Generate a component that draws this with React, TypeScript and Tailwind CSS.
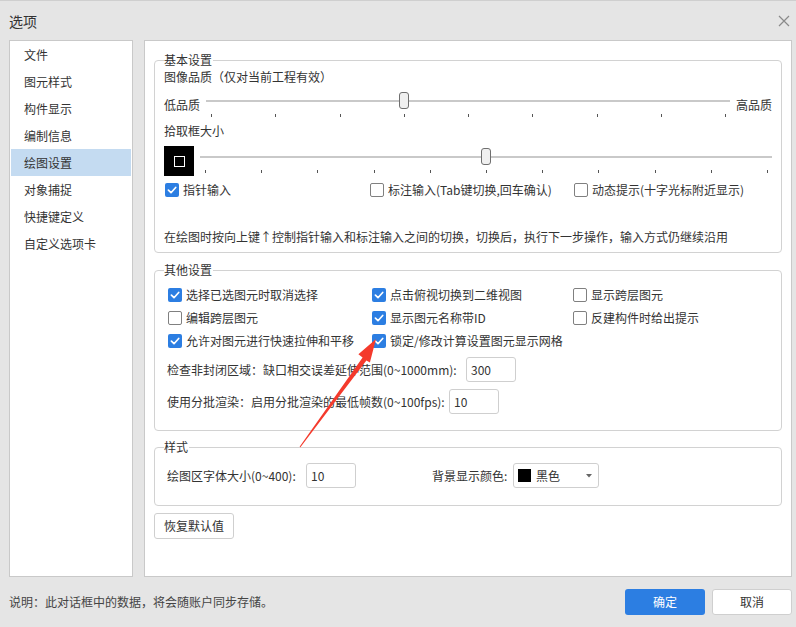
import React from 'react';

const menuItems = ['文件', '图元样式', '构件显示', '编制信息', '绘图设置', '对象捕捉', '快捷键定义', '自定义选项卡'];

const CheckBox: React.FC<{ checked?: boolean; label: string }> = ({ checked, label }) => (
  <label className="flex items-center gap-[4px] whitespace-nowrap">
    <span
      className={
        checked
          ? 'w-[14px] h-[14px] rounded-[2px] bg-[#2c7ee2] flex items-center justify-center shrink-0'
          : 'w-[14px] h-[14px] rounded-[2px] bg-white border border-[#808080] shrink-0'
      }
    >
      {checked && (
        <svg width="10" height="10" viewBox="0 0 10 10">
          <path d="M1.4 5.2 L4 7.7 L8.7 2.5" stroke="white" strokeWidth="1.7" fill="none" strokeLinecap="round" strokeLinejoin="round" />
        </svg>
      )}
    </span>
    <span>{label}</span>
  </label>
);

// track + ticks + thumb, the thumb sits on the tick at index `value`
const Slider: React.FC<{ ticks: number; value: number; trackTop: number; width: string; height: string }> = ({
  ticks,
  value,
  trackTop,
  width,
  height,
}) => {
  const pct = (i: number) => (i / (ticks - 1)) * 100;
  return (
    <div className={`relative shrink-0 ${width} ${height}`}>
      <div className="absolute left-0 right-0 h-[2px] bg-[#c9c9c9]" style={{ top: trackTop }} />
      <div className="absolute left-[5px] right-[5px] top-0 bottom-0">
        {Array.from({ length: ticks }).map((_, i) => (
          <div key={i} className="absolute w-[1px] h-[3px] bg-[#555]" style={{ left: `${pct(i)}%`, top: trackTop + 14 }} />
        ))}
        <div
          className="absolute w-[10px] h-[17px] -ml-[5px] rounded-[3px] bg-[#f0f0f0] border border-[#6f6f6f]"
          style={{ left: `${pct(value)}%`, top: trackTop - 8 }}
        />
      </div>
    </div>
  );
};

const Field: React.FC<{ value: string; className?: string }> = ({ value, className }) => (
  <div className={`w-[50px] h-[25px] bg-white border border-[#cfcfcf] rounded-[3px] pl-[4px] flex items-center ${className ?? ''}`}>
    {value}
  </div>
);

export default function App() {
  return (
    <div className="relative w-[796px] h-[627px] bg-[#e5e5e5] border-t border-[#cfcfcf] text-[12px] text-[#333] font-['Noto_Sans_CJK_SC','Microsoft_YaHei',sans-serif] leading-[16px] overflow-hidden">
      {/* title */}
      <div className="h-[39px] flex items-center justify-between pl-[9px] pr-[6px]">
        <span className="text-[14px] leading-[18px]">选项</span>
        <svg width="12" height="12" viewBox="0 0 12 12" className="mt-[1px]">
          <path d="M1 1 L11 11 M11 1 L1 11" stroke="#8a8a8a" strokeWidth="1.2" />
        </svg>
      </div>

      {/* body */}
      <div className="flex pl-[9px] pr-[4px] gap-[11px] h-[537px]">
        <div className="w-[124px] bg-white border border-[#c9c9c9] px-[1px]">
          {menuItems.map((m) => (
            <div
              key={m}
              className={m === '绘图设置' ? 'h-[27px] flex items-center pl-[13px] bg-[#c4dbf1]' : 'h-[27px] flex items-center pl-[13px]'}
            >
              {m}
            </div>
          ))}
        </div>

        <div className="w-[648px] bg-white border border-[#c9c9c9] px-[9px] pt-[11px]">
          {/* 基本设置 */}
          <fieldset className="border border-[#d2d2d2] rounded-[4px] px-[9px] pb-[7px]">
            <legend className="leading-[16px] px-0 pr-[1px]">基本设置</legend>
            <div className="h-[18px] leading-[18px]">图像品质（仅对当前工程有效）</div>
            <div className="h-[34px] flex items-start">
              <span className="w-[42px] mt-[11px] whitespace-nowrap">低品质</span>
              <Slider ticks={9} value={3} trackTop={14} width="w-[524px]" height="h-[34px]" />
              <span className="ml-[6px] mt-[11px] whitespace-nowrap">高品质</span>
            </div>
            <div className="h-[22px] leading-[22px]">拾取框大小</div>
            <div className="mt-[4px] h-[30px] flex items-start">
              <div className="w-[30px] h-[30px] bg-black flex items-center justify-center">
                <div className="w-[11px] h-[11px] border-[1.5px] border-white" />
              </div>
              <div className="ml-[6px]">
                <Slider ticks={11} value={5} trackTop={10} width="w-[572px]" height="h-[30px]" />
              </div>
            </div>
            <div className="mt-[6px] h-[16px] flex items-center pl-[1px]">
              <div className="w-[205px]">
                <CheckBox checked label="指针输入" />
              </div>
              <div className="w-[204px]">
                <CheckBox label="标注输入(Tab键切换,回车确认)" />
              </div>
              <CheckBox label="动态提示(十字光标附近显示)" />
            </div>
            <div className="mt-[31px] whitespace-nowrap">
              在绘图时按向上键↑控制指针输入和标注输入之间的切换，切换后，执行下一步操作，输入方式仍继续沿用
            </div>
          </fieldset>

          {/* 其他设置 */}
          <fieldset className="mt-[9px] border border-[#d2d2d2] rounded-[4px] px-[9px] pb-[16px]">
            <legend className="leading-[16px] px-0 pr-[1px]">其他设置</legend>
            <div className="pt-[5px] pl-[4px] grid grid-cols-[204px_201px_1fr] auto-rows-[23px] items-center">
              <CheckBox checked label="选择已选图元时取消选择" />
              <CheckBox checked label="点击俯视切换到二维视图" />
              <CheckBox label="显示跨层图元" />
              <CheckBox label="编辑跨层图元" />
              <CheckBox checked label="显示图元名称带ID" />
              <CheckBox label="反建构件时给出提示" />
              <CheckBox checked label="允许对图元进行快速拉伸和平移" />
              <CheckBox checked label="锁定/修改计算设置图元显示网格" />
            </div>
            <div className="mt-[5px] pl-[3px] flex items-center">
              <span className="w-[299px] whitespace-nowrap">检查非封闭区域：缺口相交误差延伸范围(0~1000mm):</span>
              <Field value="300" />
            </div>
            <div className="mt-[7px] pl-[3px] flex items-center">
              <span className="w-[282px] whitespace-nowrap">使用分批渲染：启用分批渲染的最低帧数(0~100fps):</span>
              <Field value="10" />
            </div>
          </fieldset>

          {/* 样式 */}
          <fieldset className="mt-[8px] border border-[#d2d2d2] rounded-[4px] px-[9px] pb-[17px]">
            <legend className="leading-[16px] px-0 pr-[1px]">样式</legend>
            <div className="mt-[8px] pl-[3px] flex items-center">
              <span className="w-[139px] whitespace-nowrap">绘图区字体大小(0~400):</span>
              <Field value="10" />
              <span className="ml-[76px] w-[81px] whitespace-nowrap">背景显示颜色:</span>
              <div className="w-[86px] h-[25px] bg-white border border-[#cfcfcf] rounded-[3px] pl-[4px] pr-[6px] flex items-center">
                <span className="w-[13px] h-[13px] bg-black" />
                <span className="ml-[5px] flex-1">黑色</span>
                <svg width="6" height="4" viewBox="0 0 6 4">
                  <path d="M0 0 L6 0 L3 3.5 Z" fill="#666" />
                </svg>
              </div>
            </div>
          </fieldset>

          <button className="mt-[7px] w-[80px] h-[26px] bg-white border border-[#cfcfcf] rounded-[3px] text-[12px] text-[#333]">
            恢复默认值
          </button>
        </div>
      </div>

      {/* footer */}
      <div className="h-[50px] flex items-center pl-[9px] pr-[4px]">
        <span className="flex-1 text-[#444]">说明：此对话框中的数据，将会随账户同步存储。</span>
        <button className="w-[80px] h-[26px] rounded-[3px] bg-[#2c7ee2] text-white text-[12px]">确定</button>
        <button className="ml-[7px] w-[80px] h-[26px] rounded-[3px] bg-white border border-[#cfcfcf] text-[12px] text-[#333]">
          取消
        </button>
      </div>

      {/* red annotation arrow */}
      <svg className="absolute inset-0 pointer-events-none" width="796" height="627" viewBox="0 0 796 627">
        <polygon
          points="299.6,445.7 362.6,356.6 358.4,353.2 376,338 369.9,361.4 366.4,359.4 300.4,446.3"
          fill="#f43a2c"
        />
      </svg>
    </div>
  );
}
